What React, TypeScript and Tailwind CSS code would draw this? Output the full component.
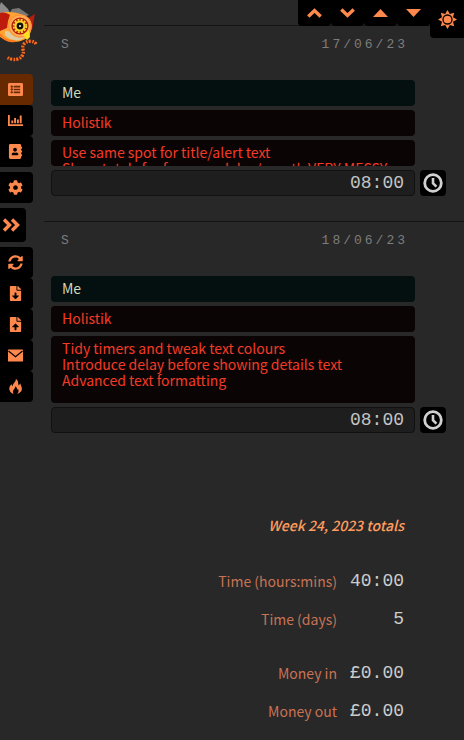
import React from "react";
import {
  FaListAlt,
  FaAddressBook,
  FaCog,
  FaSyncAlt,
  FaFileDownload,
  FaFileUpload,
} from "react-icons/fa";

const BirdLogo = () => (
  <svg width="44" height="66" viewBox="0 0 44 66" aria-label="Logo">
    <path d="M1 2 L8 9 L11 15 L0 16 L0 5 Z" fill="#8b8b8b" />
    <path d="M12 9 L19 8 L29 15 L18 19 L8 16 Z" fill="#777" />
    <path d="M25 20 L35 14 L32 30 L27 31 Z" fill="#b51c10" />
    <path
      d="M0 13 C8 11 18 12 25 16 C33 20 33 29 29 36 C23 43 9 44 0 37 Z"
      fill="#ffa332"
    />
    <path d="M0 13 C4 12 7 13 10 15 L8 21 L7 28 L0 31 Z" fill="#bd1c0c" />
    <path d="M5 31 C10 30 16 36 25 37 C20 42 10 41 5 35 Z" fill="#dccda5" />
    <path d="M0 34 C3 39 9 42 15 41" stroke="#ff7a1c" strokeWidth="2" fill="none" />
    <circle cx="20" cy="26" r="11.8" fill="#ff9136" />
    <circle cx="20" cy="26" r="10.6" fill="#ffad55" />
    <circle cx="20" cy="26" r="8.6" fill="#b01d08" />
    <circle cx="20" cy="26" r="5.6" fill="#ffd52e" />
    <circle
      cx="20"
      cy="26"
      r="6.3"
      fill="none"
      stroke="#ffd52e"
      strokeWidth="1.8"
      strokeDasharray="2 1.3"
    />
    <circle cx="20" cy="26" r="3.4" fill="#17110b" />
    <circle cx="20" cy="26" r="1" fill="#ffe" />
    <path d="M23 35 L29 30 L30 37 L27 40 Z" fill="#ffe01e" />
    <path
      d="M36 44 C34 40 25 40 23 46 C22 50 25 52 22 56 C20 60 12 61 7 57"
      fill="none"
      stroke="#8c1408"
      strokeWidth="2"
    />
    <path
      d="M36 44 C34 40 25 40 23 46 C22 50 25 52 22 56 C20 60 12 61 7 57"
      fill="none"
      stroke="#ee7424"
      strokeWidth="3.4"
      strokeDasharray="2 1.2 1.4 1.6"
    />
  </svg>
);

const Chart = () => (
  <svg width="15" height="15" viewBox="0 0 15 15" fill="none" stroke="currentColor">
    <path d="M0.9 2 V12.2 H15" strokeWidth="1.8" />
    <path d="M4.3 10.3 V7.6 M7.1 10.3 V5 M9.9 10.3 V6.4 M12.7 10.3 V2.6" strokeWidth="1.9" />
  </svg>
);

const Mail = () => (
  <svg width="15" height="15" viewBox="0 0 15 15">
    <rect y="1.5" width="15" height="12" rx="0.6" fill="currentColor" />
    <path d="M0.5 3 L7.5 8.8 L14.5 3" fill="none" stroke="#000" strokeWidth="1.2" />
  </svg>
);

const Flame = () => (
  <svg width="15" height="15" viewBox="0 0 15 15" fill="currentColor">
    <path d="M7.8 0 C8.2 3 4.8 4 4.6 7.2 C3.8 6.6 3.6 5.8 3.7 4.9 C1.6 6.8 0.8 9 1.5 11 C2.1 13 3.6 14.4 5.6 15 C4.4 13.2 4.8 11.2 6.6 9.4 C7.2 8.7 7.4 8 7.3 7.3 C8.8 8.4 9.2 9.6 8.9 11 C9.5 10.7 9.8 10.2 9.9 9.6 C11 11.4 10.7 13.5 9.3 15 C12.4 14.1 14 12 13.9 9.6 C13.8 7.8 12.6 6.6 12.4 4.6 C11.5 5.1 11.1 5.8 11.1 6.8 C10.1 5.6 10.2 4.2 10 2.9 C9.8 1.6 9 0.6 7.8 0 Z" />
  </svg>
);

const DoubleChevron = () => (
  <svg width="18" height="14" viewBox="0 0 18 14" fill="none" stroke="currentColor" strokeWidth="3.4">
    <path d="M2 1.5 L7.5 7 L2 12.5" />
    <path d="M10 1.5 L15.5 7 L10 12.5" />
  </svg>
);

const ChevronUp = () => (
  <svg width="15" height="10" viewBox="0 0 15 10" fill="none" stroke="currentColor" strokeWidth="3.4">
    <path d="M1.3 8.5 L7.5 2.5 L13.7 8.5" />
  </svg>
);

const ChevronDown = () => (
  <svg width="15" height="10" viewBox="0 0 15 10" fill="none" stroke="currentColor" strokeWidth="3.4">
    <path d="M1.3 1.5 L7.5 7.5 L13.7 1.5" />
  </svg>
);

const TriangleUp = () => (
  <svg width="15" height="8" viewBox="0 0 15 8" fill="currentColor">
    <path d="M0 8 L7.5 0 L15 8 Z" />
  </svg>
);

const TriangleDown = () => (
  <svg width="15" height="8" viewBox="0 0 15 8" fill="currentColor">
    <path d="M0 0 L15 0 L7.5 8 Z" />
  </svg>
);

const Sun = () => (
  <svg width="19" height="19" viewBox="-9.5 -9.5 19 19">
    <path
      d="M0 -9.5 L2.3 -5.5 L6.7 -6.7 L5.5 -2.3 L9.5 0 L5.5 2.3 L6.7 6.7 L2.3 5.5 L0 9.5 L-2.3 5.5 L-6.7 6.7 L-5.5 2.3 L-9.5 0 L-5.5 -2.3 L-6.7 -6.7 L-2.3 -5.5 Z"
      fill="currentColor"
    />
    <circle r="4.5" fill="none" stroke="#000" strokeWidth="1.3" />
  </svg>
);

const Clock = () => (
  <svg width="20" height="20" viewBox="0 0 20 20" fill="none" stroke="currentColor">
    <circle cx="10" cy="10" r="8.3" strokeWidth="2.8" />
    <path d="M10 5 V10.3 L13.4 13.6" strokeWidth="2.6" />
  </svg>
);

const navGroups = [
  [
    { label: "Entries", icon: <FaListAlt />, active: true },
    { label: "Charts", icon: <Chart /> },
    { label: "Clients", icon: <FaAddressBook /> },
  ],
  [{ label: "Settings", icon: <FaCog /> }],
];

const fileActions = [
  { label: "Refresh", icon: <FaSyncAlt /> },
  { label: "Download", icon: <FaFileDownload /> },
  { label: "Upload", icon: <FaFileUpload /> },
  { label: "Email", icon: <Mail /> },
  { label: "Clear", icon: <Flame /> },
];

const moveActions = [
  { label: "Top", icon: <ChevronUp /> },
  { label: "Bottom", icon: <ChevronDown /> },
  { label: "Previous", icon: <TriangleUp /> },
  { label: "Next", icon: <TriangleDown /> },
];

const entries = [
  {
    date: "17/06/23",
    client: "Me",
    job: "Holistik",
    details:
      "Use same spot for title/alert text\nShow totals for forms and day/month VERY MESSY",
    time: "08:00",
    open: false,
  },
  {
    date: "18/06/23",
    client: "Me",
    job: "Holistik",
    details:
      "Tidy timers and tweak text colours\nIntroduce delay before showing details text\nAdvanced text formatting",
    time: "08:00",
    open: true,
  },
];

const totals = [
  [
    { label: "Time (hours:mins)", value: "40:00" },
    { label: "Time (days)", value: "5" },
  ],
  [
    { label: "Money in", value: "£0.00" },
    { label: "Money out", value: "£0.00" },
  ],
];

type NavButtonProps = { label: string; icon: React.ReactNode; active?: boolean };

const NavButton = ({ label, icon, active }: NavButtonProps) => (
  <button
    aria-label={label}
    className={`flex h-[31px] w-[33px] items-center justify-center rounded-r pr-0.5 text-[15px] ${
      active ? "bg-[#662900]" : "bg-black"
    }`}
  >
    {icon}
  </button>
);

type EntryProps = (typeof entries)[number];

const Entry = ({ date, client, job, details, time, open }: EntryProps) => (
  <section className="border-t border-[#141414] pb-[25px]">
    <div className="flex h-[54px] justify-between pl-[17px] pr-14 pt-[9px] font-['Liberation_Mono',monospace] text-[13px] leading-5 tracking-[3px] text-[#7d7d7d]">
      <span>S</span>
      <time>{date}</time>
    </div>
    <div className="flex items-end gap-[5px] pl-[7px] pr-[18px]">
      <div className="flex min-w-0 flex-1 flex-col gap-1">
        <input
          aria-label="Client"
          defaultValue={client}
          className="h-[26px] w-full rounded bg-[#04100f] px-[11px] pb-0.5 text-[#d6d9b8]"
        />
        <input
          aria-label="Job"
          defaultValue={job}
          className="h-[26px] w-full rounded bg-[#0a0504] px-[11px] pb-0.5 text-[#f53a26]"
        />
        <textarea
          aria-label="Details"
          defaultValue={details}
          className={`block w-full resize-none overflow-hidden whitespace-pre rounded bg-[#0a0504] px-[11px] pt-1 leading-4 text-[#f53a26] ${
            open ? "h-[67px]" : "h-[26px]"
          }`}
        />
        <input
          aria-label="Time"
          defaultValue={time}
          className="h-[26px] w-full rounded border border-[#111] bg-[#1e1e1e] px-2.5 text-right font-['Liberation_Mono',monospace] text-[18px] text-[#c4c4c4]"
        />
      </div>
      <button
        aria-label="Start timer"
        className="flex size-[26px] items-center justify-center rounded bg-black text-[#d0d0d0]"
      >
        <Clock />
      </button>
    </div>
  </section>
);

const App = () => {
  return (
    <div className="relative flex min-h-screen w-full bg-[#282828] font-['Noto_Sans_CJK_SC',sans-serif] text-[14px]">
      {/* Sidebar */}
      <aside className="flex w-11 shrink-0 flex-col gap-[5px] text-[#ff884d]">
        <div className="h-[69px]">
          <BirdLogo />
        </div>
        {navGroups.map((group, i) => (
          <nav key={i}>
            {group.map((item) => (
              <NavButton key={item.label} {...item} />
            ))}
          </nav>
        ))}
        <button
          aria-label="Expand"
          className="flex h-[34px] w-[26px] items-center justify-center rounded-r bg-black pr-1"
        >
          <DoubleChevron />
        </button>
        <div>
          {fileActions.map((item) => (
            <NavButton key={item.label} {...item} />
          ))}
        </div>
      </aside>

      {/* Entries */}
      <main className="min-w-0 flex-1 pt-[25px]">
        {entries.map((entry) => (
          <Entry key={entry.date} {...entry} />
        ))}

        {/* Week totals */}
        <section className="flex flex-col gap-4 pb-2 pr-[60px] pt-12 text-right">
          <h2 className="pb-0.5 font-medium italic leading-[38px] text-[#ff9c5e]">
            Week 24, 2023 totals
          </h2>
          {totals.map((group, i) => (
            <dl key={i}>
              {group.map((row) => (
                <div key={row.label} className="flex h-[38px] items-center justify-end">
                  <dt className="text-[#c87355]">{row.label}</dt>
                  <dd className="w-[67px] font-['Liberation_Mono',monospace] text-[18px] text-[#ccc]">
                    {row.value}
                  </dd>
                </div>
              ))}
            </dl>
          ))}
        </section>
      </main>

      {/* Toolbar pinned over the list */}
      <div className="absolute right-0 top-0 flex items-start text-[#ff884d]">
        {moveActions.map((item) => (
          <button
            key={item.label}
            aria-label={item.label}
            className="flex h-[26px] w-[33px] items-center justify-center rounded-b bg-black"
          >
            {item.icon}
          </button>
        ))}
        <button
          aria-label="Theme"
          className="flex h-[38px] w-[34px] items-center justify-center rounded-bl bg-black"
        >
          <Sun />
        </button>
      </div>
    </div>
  );
};

export default App;
